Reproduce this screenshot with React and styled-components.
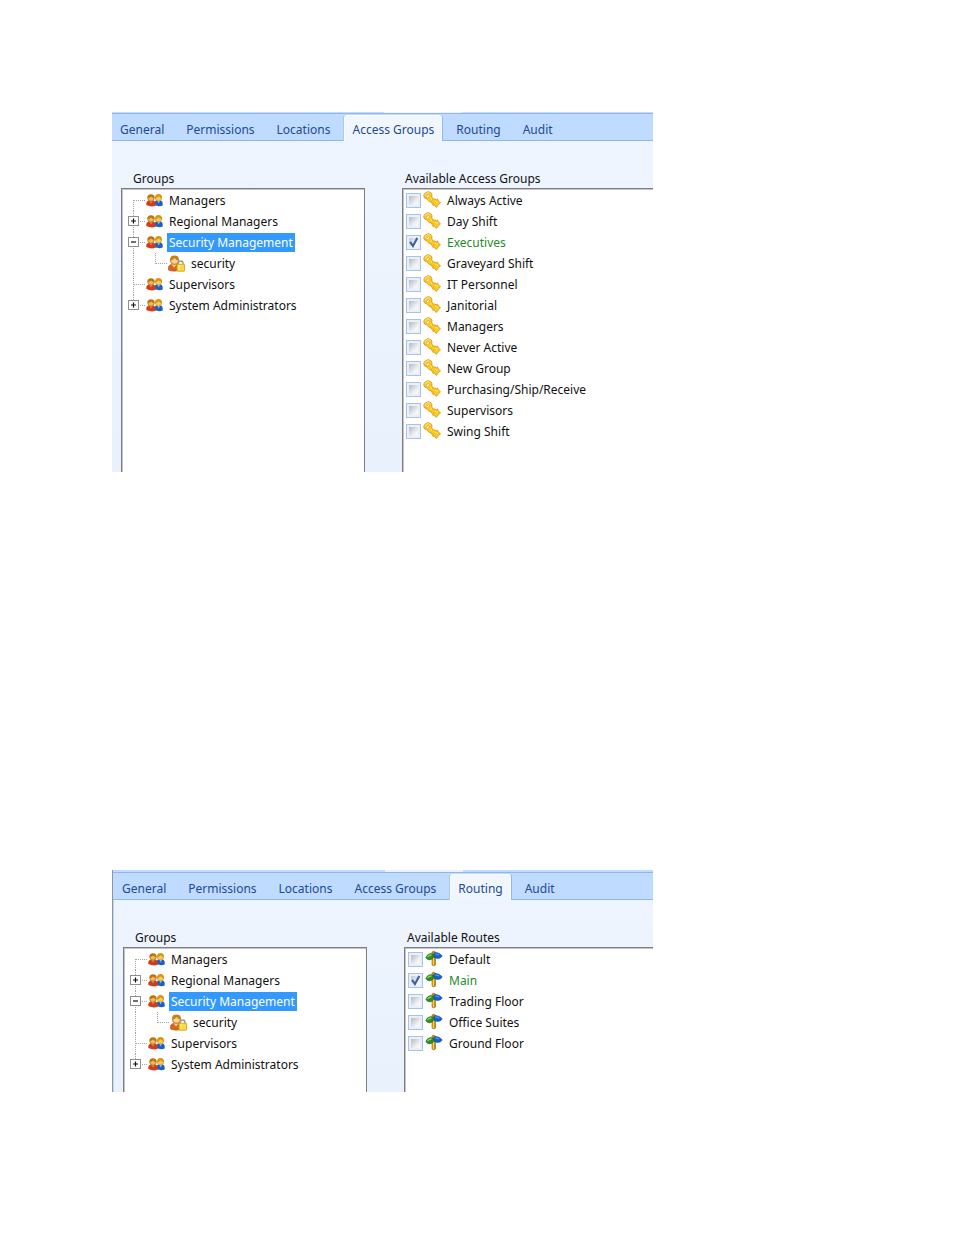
import React from 'react'
import styled, { createGlobalStyle } from 'styled-components';

const GlobalStyle = createGlobalStyle`
   *{
      box-sizing:border-box;
   }
   body{
      margin:0;
      background:#fff;
      color:#111;
      font-family:"Noto Sans", "Open Sans", sans-serif;
      font-size:12px;
      line-height:21px;
   }
   button, input{
      font:inherit;
      color:inherit;
      margin:0;
   }
`;
const StyledPage = styled.main`
   display:flex;
   flex-direction:column;
   gap:398px;
   padding:112px 301px 112px 112px;
`;
const StyledWindow = styled.section`
   border-left:${({ $edge }) => $edge ? '1px solid #8f959e' : 'none'};
   background:linear-gradient(#eef5ff, #e9f1fc);
   overflow:hidden;
`;
const StyledStrip = styled.div`
   display:flex;
   height:${({ $height }) => $height}px;
   padding-left:272px;
   background:#bfdbff;
   border-bottom:1px solid #92b6e8;
`;
const StyledStripTab = styled.span`
   width:78px;
   height:${({ $height }) => $height}px;
   background:#eaf3ff;
`;
const StyledTabs = styled.nav`
   display:flex;
   gap:6px;
   height:27px;
   padding:1px 0 0 ${({ $edge }) => $edge ? 1 : 0}px;
   background:#bfdbff;
   border-bottom:1px solid #92b6e8;
`;
const StyledTab = styled.button`
   height:26px;
   padding:4px 7px 1px;
   border:1px solid transparent;
   border-bottom:none;
   border-radius:3px 3px 0 0;
   background:none;
   color:#1e4a93;
   line-height:20px;
   white-space:nowrap;
   &[aria-selected="true"]{
      border-color:#f8fbff;
      background:linear-gradient(#f3f7fd, #edf5ff);
      box-shadow:1px 0 0 #92b6e8, -1px 0 0 #a9c8f2;
   }
`;
const StyledBody = styled.div`
   display:flex;
   gap:37px;
   padding:29px 0 0 9px;
   border-left:${({ $edge }) => $edge ? '1px solid #bfd6f6' : 'none'};
`;
const StyledColumn = styled.div`
   display:flex;
   flex-direction:column;
   flex:${({ $grow }) => $grow ? '1' : '0 0 244px'};
   min-width:0;
`;
const StyledHeading = styled.h2`
   margin:0;
   padding-left:${({ $indent }) => $indent}px;
   font-size:12px;
   font-weight:400;
   line-height:18px;
`;
const StyledList = styled.ul`
   min-height:${({ $height }) => $height}px;
   margin:0;
   padding:1px 2px 0;
   list-style:none;
   border:1px solid #7c7e84;
   border-bottom:none;
   ${({ $open }) => $open && 'border-right:none;'}
   background:#fff;
   box-shadow:inset 1px 1px 0 #c4c4c4;
`;
const StyledNode = styled.li`
   display:flex;
   align-items:center;
   height:21px;
`;
const StyledExpander = styled.button`
   display:flex;
   padding:0;
   border:none;
   background:none;
`;
const StyledName = styled.span`
   margin-left:4px;
   padding:0 2px;
   line-height:19px;
   white-space:nowrap;
   ${({ $selected }) => $selected && 'background:#3399ff; color:#fff;'}
`;
const StyledOption = styled.li`
   height:21px;
   label{
      display:flex;
      align-items:center;
      height:21px;
      padding-left:1px;
      color:${({ $checked }) => $checked ? '#1f8a2a' : 'inherit'};
      white-space:nowrap;
   }
   svg{
      margin:0 6px 2px 2px;
   }
`;
const StyledCheckbox = styled.input`
   appearance:none;
   width:15px;
   height:15px;
   border:1px solid #a9c3e4;
   background:linear-gradient(135deg, #b4bac4, #f6f6f6 75%) content-box, #e9f0f9;
   padding:2px;
   &:checked{
      background:
         url("data:image/svg+xml,%3Csvg xmlns='http://www.w3.org/2000/svg' viewBox='0 0 13 13'%3E%3Cpath d='M3.5 6L6 9.5L9.8 2.5' fill='none' stroke='%233c5f9e' stroke-width='1.8'/%3E%3C/svg%3E") border-box,
         linear-gradient(135deg, #c3cad4, #f6f6f6 75%) content-box, #e9f0f9;
   }
`;

const Branch = ({ up, down, across, sign }) => (
   <svg width="22" height="21" viewBox="0 0 22 21" aria-hidden="true">
      <g stroke="#a3a3a3" strokeDasharray="1 1">
         {up && <path d="M9.500 0V11" />}
         {down && <path d="M9.500 10V21" />}
         {across && <path d="M10 10.500H22" />}
      </g>
      {sign && <rect x="4.500" y="5.500" width="10" height="9" fill="#fff" stroke="#8e8e8e" />}
      {sign && <path d={sign === '+' ? 'M7 10H12M9.500 7.500V12.500' : 'M7 10H12'} stroke="#111" strokeWidth="1.200" />}
   </svg>
)

const PeopleIcon = () => (
   <svg width="17" height="16" viewBox="0 0 17 16" aria-hidden="true">
      <path d="M8.500 12V9Q9.500 7 12.500 7Q16.700 7 16.700 10.500V12.500Q13 14 8.500 12Z" fill="#1c5fc6" />
      <path d="M11 7L12.700 10.500L14.500 7Z" fill="#7fc8f5" />
      <path d="M9 4.500Q9 1 12.500 1Q16 1 16 4.500Q16 8 12.500 8.300Q9 8 9 4.500Z" fill="#d99512" />
      <path d="M10 5Q11.500 4.800 12.500 3.200Q13.800 4.500 15 5Q15 7.600 12.500 7.600Q10 7.600 10 5Z" fill="#fbc95f" />
      <path d="M.3 12V10Q1 7.300 5 7.300Q9.700 7.300 9.700 11V12.800Q5 14.500 .3 12Z" fill="#cf3d1d" />
      <path d="M3 7.500L5 10.500L7 7.500Z" fill="#e8835a" />
      <path d="M1.300 4.800Q1.300 1.300 5 1.300Q8.700 1.300 8.700 4.800Q8.500 8.500 5 8.500Q1.500 8.500 1.300 4.800Z" fill="#b97412" />
      <path d="M2.300 5Q4 4.800 5 3.500Q6.300 4.800 7.700 5Q7.500 7.800 5 7.800Q2.500 7.800 2.300 5Z" fill="#f5b75c" />
   </svg>
)

const UserLockIcon = () => (
   <svg width="17" height="18" viewBox="0 0 17 18" aria-hidden="true">
      <path d="M.4 15V12.500Q1 9 6 9Q11 9 11.500 13V15.500Q5 17 .4 15Z" fill="#d9661f" stroke="#b0470f" strokeWidth=".6" />
      <path d="M3.500 9.500L6 12.500L8.500 9.500Z" fill="#ffd2a0" />
      <path d="M2 5Q2 .6 6.500 .6Q11 .6 11 5Q11 9.500 6.500 9.500Q2 9.500 2 5Z" fill="#c8811a" />
      <path d="M3 5.500Q5.300 5 6.500 3Q8 5 10 5.500Q9.700 8.700 6.500 8.700Q3.300 8.700 3 5.500Z" fill="#fbd38a" />
      <path d="M10.300 10V8.200Q10.300 6 12.700 6Q15 6 15 8.200V10" fill="none" stroke="#9a9a9a" strokeWidth="1.400" />
      <rect x="9" y="9.200" width="7.500" height="7" rx=".6" fill="#ffd83b" stroke="#d09a10" strokeWidth=".8" />
      <path d="M11 10.200V15.200" stroke="#fff3a8" />
   </svg>
)

const KeysIcon = () => (
   <svg width="18" height="18" viewBox="0 0 18 18" aria-hidden="true">
      <path
         d="M2.300 2Q5 -.5 7.800 1.600Q9.600 3.500 8.800 5.800L9.900 8L12.300 8L13 9.300L14.500 8L15.300 10L17.500 11.800L15.300 13.800L13.300 16.500L11.500 14.500L9.500 14L10.500 12.200L8.200 12L8 10.200L6.300 10.500L4.300 8.600L3.600 7.800Q1.200 7.500 .8 5.200Q.7 3.300 2.300 2Z"
         fill="#ffc91c" stroke="#d39b22" strokeWidth=".9" strokeLinejoin="round"
      />
      <path d="M2.200 4.500Q2.500 2 5 1.700Q6.500 1.600 7.500 3" fill="none" stroke="#ffe878" />
      <path d="M2.800 6.300Q3 4.500 5.600 3.800L6.800 4.800L4.600 6.800Z" fill="#fff" stroke="#d39b22" strokeWidth=".6" />
      <path d="M7.500 6.500L8.800 9M12 10L15 11.300" stroke="#ffe878" />
   </svg>
)

const RouteIcon = () => (
   <svg width="18" height="18" viewBox="0 0 18 18" aria-hidden="true">
      <path d="M7 2Q8.500 .3 10.500 2V15Q8.500 16.500 7 15Z" fill="#c98f18" stroke="#94660b" strokeWidth=".6" />
      <path d="M8.300 8V15" stroke="#ffe066" />
      <path d="M8.500 4.500Q8.500 2.500 11 2.500Q14.500 2.500 17.300 6Q15.500 8.800 12 8.500Q8.500 8 8.500 4.500Z" fill="#1461cf" stroke="#0b3f94" strokeWidth=".5" />
      <path d="M10 4.300Q12 3.500 14 5" fill="none" stroke="#45a0ee" strokeWidth="1.200" />
      <path d="M.8 7.500Q2.500 3.500 6 3.500Q8.800 4 8.800 6.500Q8 9.600 4.500 9.900Q2 9.800 .8 7.500Z" fill="#2b8e2a" stroke="#175c17" strokeWidth=".5" />
      <path d="M2.500 7Q4 4.800 6.500 5" fill="none" stroke="#9ad044" strokeWidth="1.300" />
   </svg>
)

const tabs = ['General', 'Permissions', 'Locations', 'Access Groups', 'Routing', 'Audit']

const tree = [
   { name: 'Managers', first: true },
   { name: 'Regional Managers', sign: '+' },
   { name: 'Security Management', sign: '-', selected: true },
   { name: 'security', child: true },
   { name: 'Supervisors' },
   { name: 'System Administrators', sign: '+', last: true },
]

const accessGroups = [
   'Always Active', 'Day Shift', 'Executives', 'Graveyard Shift', 'IT Personnel', 'Janitorial',
   'Managers', 'Never Active', 'New Group', 'Purchasing/Ship/Receive', 'Supervisors', 'Swing Shift',
]

const routes = ['Default', 'Main', 'Trading Floor', 'Office Suites', 'Ground Floor']

const TreeNode = ({ name, sign, first, last, child, selected }) => (
   <StyledNode>
      {child && <><Branch up down /><Branch up across /></>}
      {!child && sign && (
         <StyledExpander type="button" aria-label={name} aria-expanded={sign === '-'}>
            <Branch up down={!last} across sign={sign} />
         </StyledExpander>
      )}
      {!child && !sign && <Branch up={!first} down across />}
      {child ? <UserLockIcon /> : <PeopleIcon />}
      <StyledName $selected={selected}>{name}</StyledName>
   </StyledNode>
)

const SettingsWindow = ({ active, title, options, checked, Icon, height, strip, edge }) => (
   <StyledWindow $edge={edge}>
      <StyledStrip $height={strip}><StyledStripTab $height={strip - 1} /></StyledStrip>
      <StyledTabs role="tablist" $edge={edge}>
         {tabs.map(tab => <StyledTab key={tab} type="button" role="tab" aria-selected={tab === active}>{tab}</StyledTab>)}
      </StyledTabs>
      <StyledBody $edge={edge}>
         <StyledColumn>
            <StyledHeading $indent={12}>Groups</StyledHeading>
            <StyledList $height={height}>
               {tree.map(node => <TreeNode key={node.name} {...node} />)}
            </StyledList>
         </StyledColumn>
         <StyledColumn $grow>
            <StyledHeading $indent={3}>{title}</StyledHeading>
            <StyledList $height={height} $open>
               {options.map(option => (
                  <StyledOption key={option} $checked={option === checked}>
                     <label>
                        <StyledCheckbox type="checkbox" defaultChecked={option === checked} />
                        <Icon />
                        {option}
                     </label>
                  </StyledOption>
               ))}
            </StyledList>
         </StyledColumn>
      </StyledBody>
   </StyledWindow>
)

const App = () => (
   <>
      <GlobalStyle />
      <StyledPage>
         <SettingsWindow
            active="Access Groups"
            title="Available Access Groups"
            options={accessGroups}
            checked="Executives"
            Icon={KeysIcon}
            height={284}
            strip={2}
         />
         <SettingsWindow
            active="Routing"
            title="Available Routes"
            options={routes}
            checked="Main"
            Icon={RouteIcon}
            height={145}
            strip={3}
            edge
         />
      </StyledPage>
   </>
)

export default App
